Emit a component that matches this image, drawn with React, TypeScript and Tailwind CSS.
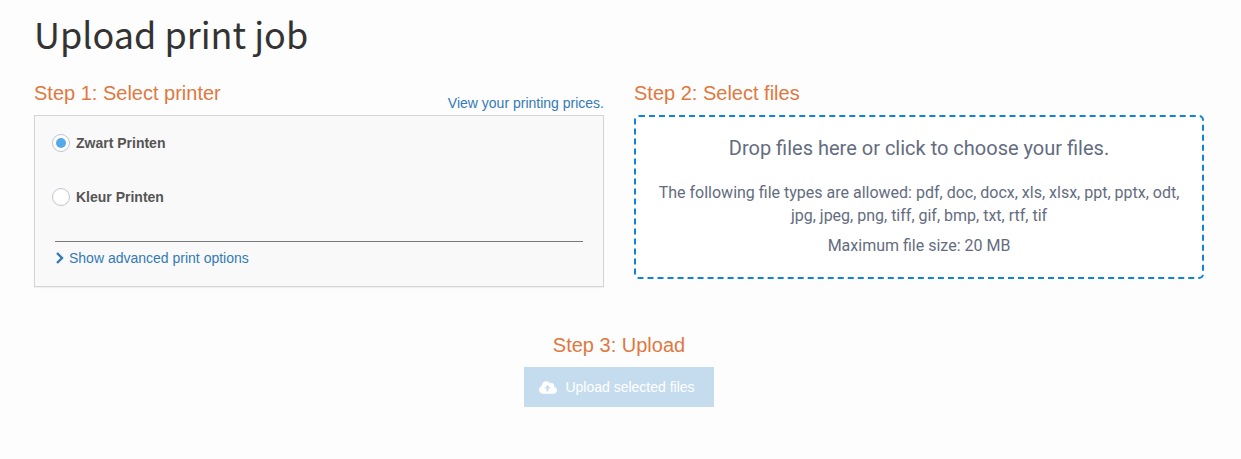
import React, { useState } from 'react';

const printers = [
  { id: 'zwart', name: 'Zwart Printen' },
  { id: 'kleur', name: 'Kleur Printen' },
];

const fileTypes = 'pdf, doc, docx, xls, xlsx, ppt, pptx, odt, jpg, jpeg, png, tiff, gif, bmp, txt, rtf, tif';

const StepTitle: React.FC<{ children: React.ReactNode }> = ({ children }) => (
  <h2 className="text-[20px] leading-6 text-[#e07840]">{children}</h2>
);

const CloudUploadIcon = () => (
  <svg viewBox="0 0 640 512" className="h-[15px] w-[18px]" fill="currentColor" aria-hidden="true">
    <path d="M537.6 226.6c4.1-10.7 6.4-22.4 6.4-34.6 0-53-43-96-96-96-19.7 0-38.1 6-53.3 16.2C367 64.2 315.3 32 256 32c-88.4 0-160 71.6-160 160 0 2.7.1 5.4.2 8.1C40.2 219.8 0 273.2 0 336c0 79.5 64.5 144 144 144h368c70.7 0 128-57.3 128-128 0-61.9-44-113.6-102.4-125.4z" />
    <path d="M300 170l110 120h-76v104h-68V290h-76z" fill="#c5dcef" />
  </svg>
);

const App: React.FC = () => {
  const [printer, setPrinter] = useState('zwart');

  return (
    <main className="min-h-screen bg-[#fdfdfd] pt-[10px] pr-[37px] pb-8 pl-[34px] font-['Liberation_Sans',Arial,sans-serif] text-[14px]">
      <h1 className="font-['Noto_Sans_CJK_SC',sans-serif] text-[36px] leading-[46px] text-[#333]">Upload print job</h1>

      <div className="mt-[25px] grid grid-cols-2 items-start gap-[30px]">
        {/* Step 1 */}
        <section>
          <div className="flex h-[34px] items-start justify-between">
            <StepTitle>Step 1: Select printer</StepTitle>
            <a href="#prices" className="mt-3 leading-5 text-[#337ab7]">View your printing prices.</a>
          </div>
          <div className="border border-[#d5d5d5] bg-[#f9f9f9] px-5 pt-[17px] pb-[18px] shadow-[0_1px_1px_#0000000d]">
            <fieldset>
              {printers.map((item) => (
                <label key={item.id} className="mb-[34px] -ml-[3px] flex items-center gap-[6px] leading-5 font-bold text-[#555]">
                  <input
                    type="radio"
                    name="printer"
                    checked={printer === item.id}
                    onChange={() => setPrinter(item.id)}
                    className="grid size-[18px] appearance-none place-items-center rounded-full border border-[#c3c3d0] bg-white before:size-[10px] before:rounded-full checked:before:bg-[#54a9e8]"
                  />
                  {item.name}
                </label>
              ))}
            </fieldset>
            <div className="border-t border-[#777] pt-[6px]">
              <button type="button" className="flex items-center gap-[5px] leading-5 text-[#337ab7]">
                <svg viewBox="0 0 9 12" className="h-3 w-[9px]" fill="none" stroke="currentColor" strokeWidth="2.4">
                  <path d="M2 1l5 5-5 5" />
                </svg>
                Show advanced print options
              </button>
            </div>
          </div>
        </section>

        {/* Step 2 */}
        <section>
          <div className="h-[34px]">
            <StepTitle>Step 2: Select files</StepTitle>
          </div>
          <button
            type="button"
            className="w-full rounded-[5px] border-2 border-dashed border-[#0d84d8] bg-white px-5 pt-[19px] pb-5 font-[Roboto,sans-serif] text-[16px] leading-[23px] text-[#646c7f]"
          >
            <span className="block text-[20px] leading-6">Drop files here or click to choose your files.</span>
            <span className="mt-[21px] block">{`The following file types are allowed: ${fileTypes}`}</span>
            <span className="mt-[7px] block">Maximum file size: 20 MB</span>
          </button>
        </section>
      </div>

      {/* Step 3 */}
      <section className="mt-[46px] flex flex-col items-center">
        <StepTitle>Step 3: Upload</StepTitle>
        <button type="button" disabled className="mt-[10px] flex h-10 items-center gap-2 bg-[#c5dcef] pr-[19px] pl-[15px] text-white">
          <CloudUploadIcon />
          Upload selected files
        </button>
      </section>
    </main>
  );
};

export default App;
